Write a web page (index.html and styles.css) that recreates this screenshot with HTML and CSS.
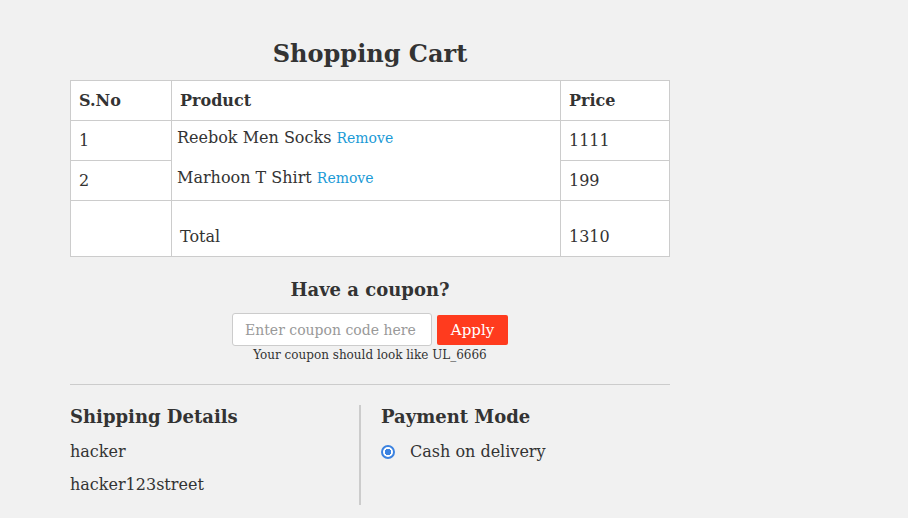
FILE: index.html
```html
<!DOCTYPE html>
<html>
<head>
<meta charset="utf-8">
<link rel="stylesheet" href="styles.css">
</head>
<body>
<div class="page">
  <h1 class="title">Shopping Cart</h1>
  <table class="cart">
    <thead>
      <tr><th class="c-no">S.No</th><th class="c-prod">Product</th><th class="c-price">Price</th></tr>
    </thead>
    <tbody>
      <tr>
        <td>1</td>
        <td class="prod" rowspan="2">
          <div class="item">Reebok Men Socks <a class="remove" href="#">Remove</a></div>
          <div class="item">Marhoon T Shirt <a class="remove" href="#">Remove</a></div>
        </td>
        <td>1111</td>
      </tr>
      <tr><td>2</td><td>199</td></tr>
      <tr class="total"><td></td><td class="total-label">Total</td><td>1310</td></tr>
    </tbody>
  </table>

  <div class="coupon">
    <h2 class="coupon-title">Have a coupon?</h2>
    <div class="coupon-form">
      <input class="coupon-input" type="text" placeholder="Enter coupon code here">
      <button class="apply">Apply</button>
    </div>
    <div class="hint">Your coupon should look like UL_6666</div>
  </div>

  <hr class="sep">

  <div class="details">
    <div class="shipping">
      <h3 class="sec-title">Shipping Details</h3>
      <div class="line">hacker</div>
      <div class="line">hacker123street</div>
    </div>
    <div class="payment">
      <h3 class="sec-title">Payment Mode</h3>
      <label class="radio-row"><span class="radio"></span>Cash on delivery</label>
    </div>
  </div>
</div>
</body>
</html>
```
FILE: styles.css
```css
html, body {
  margin: 0;
  padding: 0;
  background: #f1f1f1;
  color: #333;
  font-family: "DejaVu Serif", serif;
  font-size: 16px;
}
.page {
  width: 600px;
  margin-left: 70px;
  padding-top: 39px;
}
.title {
  margin: 0 0 11px;
  text-align: center;
  font-size: 24px;
  line-height: 30px;
  font-weight: bold;
}
.cart {
  width: 600px;
  border-collapse: collapse;
  background: #fff;
}
.cart th, .cart td {
  border: 1px solid #ccc;
  text-align: left;
  padding: 0 8px;
  height: 39px;
  font-size: 16px;
  vertical-align: middle;
}
.cart th { font-weight: bold; }
.c-no { width: 84px; }
.c-price { width: 92px; }
.cart td.prod {
  padding: 0 5px;
  vertical-align: top;
}
.item {
  height: 40px;
  line-height: 34px;
}
.item + .item { height: 39px; }
.remove {
  color: #1a9ad6;
  font-size: 14px;
  text-decoration: none;
}
.cart .total td {
  height: 45px;
  vertical-align: bottom;
  padding-bottom: 10px;
}
.coupon {
  text-align: center;
  padding-top: 21px;
}
.coupon-title {
  margin: 0 0 11px;
  font-size: 18px;
  line-height: 24px;
  font-weight: bold;
}
.coupon-form {
  display: flex;
  justify-content: center;
  align-items: center;
  gap: 5px;
}
.coupon-input {
  box-sizing: border-box;
  width: 200px;
  height: 33px;
  border: 1px solid #ccc;
  border-radius: 3px;
  padding: 0 12px;
  font-family: "DejaVu Serif", serif;
  font-size: 14px;
  color: #333;
  background: #fff;
}
.coupon-input::placeholder { color: #999; }
.apply {
  box-sizing: border-box;
  width: 71px;
  height: 30px;
  border: none;
  border-radius: 2px;
  background: #ff3b1e;
  color: #fff;
  font-family: "DejaVu Serif", serif;
  font-size: 15px;
  padding: 0;
}
.hint {
  font-size: 12px;
  line-height: 16px;
  margin-top: 1px;
}
.sep {
  border: none;
  border-top: 1px solid #ccc;
  margin: 21px 0 0;
  height: 0;
}
.details {
  display: flex;
  margin-top: 20px;
}
.shipping {
  width: 289px;
  border-right: 2px solid #ccc;
  height: 99px;
  padding-top: 1px;
}
.payment {
  padding-left: 20px;
  padding-top: 1px;
}
.sec-title {
  margin: 0;
  font-size: 18px;
  line-height: 22px;
  font-weight: bold;
}
.line {
  margin-top: 13px;
  line-height: 22px;
}
.line + .line { margin-top: 11px; }
.radio-row {
  display: flex;
  align-items: center;
  margin-top: 13px;
  line-height: 22px;
}
.radio {
  box-sizing: border-box;
  width: 14px;
  height: 14px;
  border-radius: 50%;
  border: 2px solid #3b82e0;
  background: radial-gradient(circle, #3b82e0 0 3px, #fff 3.5px);
  margin-right: 15px;
}
```
